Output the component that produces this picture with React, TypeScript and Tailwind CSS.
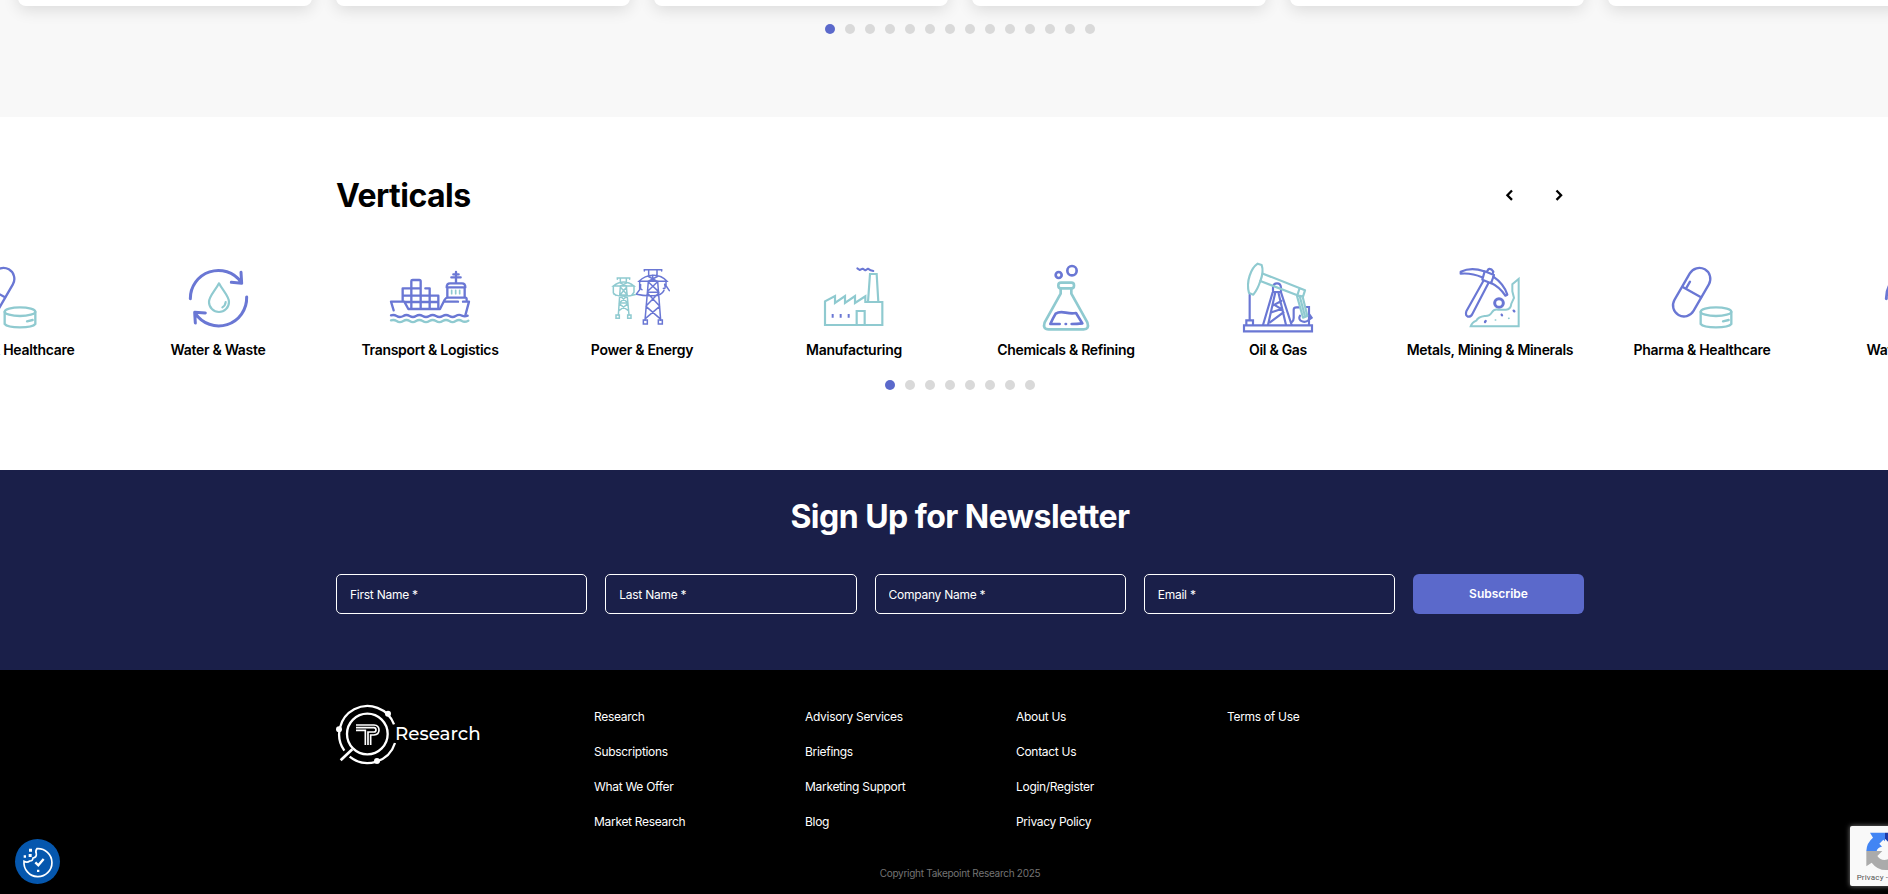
import React from "react";

const P = "#6a77d4";
const T = "#8fcad0";

const Icon = ({ x, children }: { x: number; children: React.ReactNode }) => (
  <svg width="100" height="80" viewBox={`${x} 31 300 240`} fill="none" strokeWidth="7" strokeLinecap="round" strokeLinejoin="round">
    {children}
  </svg>
);

const Water = () => (
  <Icon x={504}>
    <g stroke={P} strokeWidth="9">
      <path d="M571 147A84 84 0 0 1 723 97M694 98L725 101L723 68" />
      <path d="M740 142A84 84 0 0 1 586 191M586 220L584 188L616 190" />
    </g>
    <path stroke={T} strokeWidth="6.500" d="M657 101C647 121 627 140 627 157A30 30 0 0 0 687 157C687 140 667 121 657 101ZM677 157Q676 168 667 173" />
  </Icon>
);

const Transport = () => (
  <Icon x={90}>
    <g stroke={P}>
      <path d="M131 182L123 156H163L175 178H270L284 150Q287 144 294 144H346Q350 144 350 150M284 156H324M339 156H357L346 197" />
      <path d="M158 153V116H212V176M184 176V94Q184 91 188 91H208Q212 91 212 95V116M226 116H239V176M158 138H265V176M165 157H265" />
      <path d="M292 142V113H344V142M290 113Q290 101 300 101H336Q346 101 346 113M318 98V67M304 83H332M310 74H326" />
    </g>
    <path stroke={T} strokeWidth="5" d="M305 122V132M317 122V132M329 122V132" />
    <path stroke={P} d="M123 197Q132 194 140 199Q149 205 160 199Q169 193 179 199Q189 205 198 199Q208 193 218 199Q228 205 238 199Q248 193 258 199Q268 205 278 199Q288 193 298 199Q308 205 317 199Q327 193 336 198Q344 202 353 198" />
    <path stroke={T} d="M123 212Q132 209 140 214Q149 221 160 214Q169 208 179 214Q189 221 198 214Q208 208 218 214Q228 221 238 214Q248 208 258 214Q268 221 278 214Q288 208 298 214Q308 221 317 214Q327 208 336 214Q344 219 355 213" />
  </Icon>
);

const Power = () => (
  <Icon x={726}>
    <g stroke={T} strokeWidth="4.500" strokeLinejoin="miter">
      <path d="M802 89V85H839V89M811 86V100M829 86V100M790 109Q805 97 821 97T852 109ZM809 99L829 109M832 99L811 109" />
      <path d="M811 110L805 196M829 110L837 196M811 112L832 136M830 112L810 136M809 136H832M809 138L834 160M832 138L808 160M808 160H834M807 162L836 184M834 162L806 184M790 110V130L798 137M852 110V128L846 135M792 134Q820 146 860 134" />
      <path d="M798 196H808V206H798ZM833 196H843V206H833Z" />
    </g>
    <g stroke={P} strokeWidth="4.500" strokeLinejoin="miter">
      <path d="M883 64V60H935V64M896 61V78M921 61V78M867 95Q884 78 909 77T951 95ZM893 79L922 95M925 79L894 95M908 77V95" />
      <path d="M895 95L885 212M923 95L932 212M895 97L925 125M922 97L893 125M892 128H927M892 130L928 168M926 130L889 168M888 170L930 207M929 170L886 207M869 96V120L860 132M872 105Q870 120 876 120M948 96V108L958 123M940 116Q948 120 944 104M860 134Q886 140 909 138Q934 139 942 122" />
      <path d="M880 211H892V223H880ZM925 211H937V223H925Z" />
    </g>
  </Icon>
);

const Factory = () => (
  <Icon x={72}>
    <g stroke={T} strokeWidth="6.500" strokeLinejoin="miter" strokeLinecap="butt">
      <path d="M135 226V155L165 139V160L195 139V160L225 139V160L256 140V157H307V226Z" />
      <path d="M264 157L270 73H290L295 157M230 226V184H254V226" />
    </g>
    <path stroke={P} strokeLinecap="butt" strokeWidth="6" d="M158 193V204M182 193V204M206 193V204" />
    <path stroke={P} strokeWidth="6" d="M232 56L239 61L248 57L256 62L264 57L272 62L280 64" />
  </Icon>
);

const Flask = () => (
  <Icon x={708}>
    <g stroke={P} strokeWidth="8">
      <circle cx="876" cy="63" r="14" />
      <circle cx="836" cy="76" r="9" />
      <path d="M839 223H811Q818 207 827 192Q838 185 857 189T888 190L907 221Q891 223 875 223" />
      <path d="M857 223H858" />
    </g>
    <g stroke={T} strokeWidth="8">
      <rect x="835" y="99" width="47" height="17" rx="8" />
      <path d="M842 117V132L794 218Q787 239 806 239H911Q929 239 922 218L874 132V117" />
    </g>
  </Icon>
);

const Oil = () => (
  <Icon x={84}>
    <g stroke={P} strokeWidth="6.500" strokeLinejoin="miter">
      <path d="M149 135V212M139 226V212H159V226M132 227H336V245H132Z" />
      <path d="M189 226L218 128M204 226L226 128M235 128L258 226M243 128L275 226M219 127V114Q220 101 231 101T243 114V127ZM222 165L244 178L215 188M218 168L244 154M210 218L250 188L245 178M276 217Q281 213 281 205V180Q281 173 290 173H298M318 172H327V226M300 198Q295 207 302 213Q315 221 326 211L335 204L328 194" />
    </g>
    <g stroke={T} strokeWidth="6.500">
      <path d="M173 42L185 46Q192 66 181 94Q173 119 160 135L147 130Q140 105 149 78Q157 53 173 42Z" />
      <path d="M189 72L315 122L309 141L292 137L181 94M298 118L292 137M291 139L309 204L322 199L308 141M300 143L314 196" />
    </g>
  </Icon>
);

const Mining = () => (
  <Icon x={720}>
    <g stroke={P} strokeWidth="6.500">
      <path d="M852 65Q815 51 782 66V72Q815 69 846 83M880 81Q912 103 922 135L916 138Q900 112 872 99" />
      <path d="M854 65L882 76L873 101L847 90ZM861 65L866 58Q874 56 880 66L878 73M850 94L799 185Q795 197 804 201Q813 202 817 193L865 101" />
      <circle cx="897" cy="160" r="13" strokeWidth="9" />
    </g>
    <path stroke={T} strokeWidth="6" strokeLinejoin="miter" d="M812 230H956V88L937 104V125L942 145L934 162Q932 180 918 180H894Q882 178 876 188Q869 200 854 199Q834 202 829 213Q816 218 812 230Z" />
    <path stroke={P} d="M855 217L857 214M905 195L906 197M941 183L943 185" />
    <path stroke={T} strokeWidth="5" d="M886 211H887M926 206H927" />
  </Icon>
);

const Pharma = () => (
  <Icon x={156}>
    <g stroke={P}>
      <rect x="-33" y="-79" width="66" height="158" rx="33" transform="translate(275 127.500) rotate(30)" />
      <path d="M248 112L303 143M260 113L270 96" />
    </g>
    <g stroke={T}>
      <ellipse cx="348" cy="186" rx="46" ry="13" />
      <path d="M302 187V223Q310 233 348 233T394 223V187M369 215L386 211" />
    </g>
  </Icon>
);

const verticals: [string, () => React.JSX.Element][] = [
  ["Pharma & Healthcare", Pharma],
  ["Water & Waste", Water],
  ["Transport & Logistics", Transport],
  ["Power & Energy", Power],
  ["Manufacturing", Factory],
  ["Chemicals & Refining", Flask],
  ["Oil & Gas", Oil],
  ["Metals, Mining & Minerals", Mining],
  ["Pharma & Healthcare", Pharma],
  ["Water & Waste", Water],
];

const Dots = ({ n }: { n: number }) => (
  <div className="flex justify-center gap-[10px]">
    {Array.from({ length: n }, (_, i) => (
      <span key={i} className={i === 0 ? "size-[10px] rounded-full bg-[#5b69cb]" : "size-[10px] rounded-full bg-[#d9d9d9]"} />
    ))}
  </div>
);

const links = [
  ["Research", "Subscriptions", "What We Offer", "Market Research"],
  ["Advisory Services", "Briefings", "Marketing Support", "Blog"],
  ["About Us", "Contact Us", "Login/Register", "Privacy Policy"],
  ["Terms of Use"],
];

const Logo = () => (
  <svg width="150" height="70" viewBox="48 36 450 210" fill="none" stroke="#fff" strokeWidth="7">
    <path d="M73 182A85 85 0 1 1 222 103M225 159A86 86 0 0 1 89 200" />
    <circle cx="142" cy="132" r="61" />
    <path strokeWidth="8" d="M97 178L62 211" />
    <g fill="#fff" stroke="none">
      <circle cx="57" cy="118" r="9" />
      <circle cx="204" cy="71" r="9" />
      <circle cx="171" cy="213" r="9" />
    </g>
    <g strokeWidth="5">
      <path d="M108 105H162Q177 106 177 120T162 135H152V165" />
      <path d="M108 113H162Q168 114 168 120T162 126H144V165M108 121H136V165" />
    </g>
    <text x="225" y="151" fill="#fff" stroke="none" fontFamily="Montserrat, Inter, sans-serif" fontWeight="500" fontSize="53" textLength="257" lengthAdjust="spacingAndGlyphs">Research</text>
  </svg>
);

export default function App() {
  return (
    <div className="relative h-[894px] w-full overflow-hidden bg-white font-['Inter',sans-serif] text-black">
      <div className="w-[1920px]">
        <section className="h-[117px] bg-[#f8f8f8]">
          <div className="ml-[18px] flex h-[6px] items-end gap-6">
            {[0, 1, 2, 3, 4, 5].map((i) => (
              <div key={i} className="h-[200px] w-[294px] shrink-0 rounded-b-[8px] bg-white shadow-[0_4px_16px_rgba(0,0,0,0.12)]" />
            ))}
          </div>
          <div className="pt-[18px]">
            <Dots n={14} />
          </div>
        </section>

        <section className="h-[353px] pt-[54px]">
          <div className="mx-auto flex h-12 w-[1248px] items-center justify-between">
            <h2 className="pt-px text-[32px] font-bold tracking-[-0.53px]">Verticals</h2>
            <div className="flex gap-[38px] pr-[19px]">
              {["M9 2.500L4.400 7.200L9 11.900", "M3.500 2.500L8.100 7.200L3.500 11.900"].map((d) => (
                <svg key={d} width="12" height="14" viewBox="0 0 12 14" fill="none" stroke="#000" strokeWidth="2.300">
                  <path d={d} />
                </svg>
              ))}
            </div>
          </div>
          <div className="-ml-[100px] mt-[41px] flex w-[2120px]">
            {verticals.map(([label, Pic], i) => (
              <div key={i} className="flex w-[212px] shrink-0 flex-col items-center">
                <Pic />
                <p className="text-sm font-semibold leading-5 tracking-[-0.3px] whitespace-nowrap">{label}</p>
              </div>
            ))}
          </div>
          <div className="pt-[20px]">
            <Dots n={8} />
          </div>
        </section>

        <section className="h-[200px] bg-[#1a1f49] pt-[23px]">
          <h2 className="text-center text-[32px] leading-[48px] font-bold tracking-[-0.53px] text-white">Sign Up for Newsletter</h2>
          <form className="mx-auto mt-[33px] flex w-[1248px] gap-[18px]">
            {["First Name *", "Last Name *", "Company Name *", "Email *"].map((p) => (
              <input key={p} placeholder={p} className="h-10 min-w-0 flex-1 rounded-[5px] border border-white bg-transparent px-[13px] text-xs tracking-[-0.25px] text-white placeholder:text-white" />
            ))}
            <button type="button" className="h-10 w-[171px] rounded-[6px] bg-[#5b69cb] text-xs font-semibold text-white">Subscribe</button>
          </form>
        </section>

        <footer className="h-[224px] bg-black pt-[32px] text-white">
          <div className="mx-auto flex h-[164px] w-[1248px]">
            <div className="w-[258px]">
              <Logo />
            </div>
            {links.map((col) => (
              <ul key={col[0]} className="w-[211px] pt-[5px] text-xs tracking-[-0.3px]">
                {col.map((l) => (
                  <li key={l} className="h-[35px] leading-[20px]">{l}</li>
                ))}
              </ul>
            ))}
          </div>
          <p className="text-center text-[10px] leading-[14px] tracking-[-0.28px] text-[#737373]">Copyright Takepoint Research 2025</p>
        </footer>
      </div>

      <div className="absolute top-[839px] left-[15px] flex size-[45px] items-center justify-center rounded-full bg-[#0557ae]">
        <svg width="45" height="45" viewBox="45 27 135 135" fill="none" stroke="#fff" strokeWidth="5">
          <path d="M111 56A42 42 0 1 1 72 94Q82 99 89 93Q98 94 99 84Q110 82 109 72Q105 63 111 56Z" />
          <path strokeWidth="7" d="M106 97L115 106L131 87" />
          <path fill="#fff" stroke="none" d="M111 119h7v7h-7zM87 56h9v9h-9zM86 72h9v9h-9zM71 76h7v7h-7z" />
        </svg>
      </div>

      <div className="absolute top-[826px] left-[1850px] h-[60px] w-[70px] rounded-[2px] bg-[#f9f9f9] shadow-[0_0_5px_gray]">
        <svg width="38" height="60" viewBox="90 78 114 180">
          <path fill="#1c3aa9" d="M195 98H204V125L195 116Z" />
          <path fill="#4285f4" d="M150 98H195V124L190 119L178 131L186 140Q172 142 170 153H139Q140 128 159 113Z" />
          <path fill="#ababab" d="M139 153H187L172 168Q184 185 204 178V210Q174 213 155 188L139 199Z" />
          <text x="110" y="241" fill="#555" fontFamily="Roboto, sans-serif" fontSize="24" letterSpacing="0.500">Privacy - Terms</text>
        </svg>
      </div>
    </div>
  );
}
